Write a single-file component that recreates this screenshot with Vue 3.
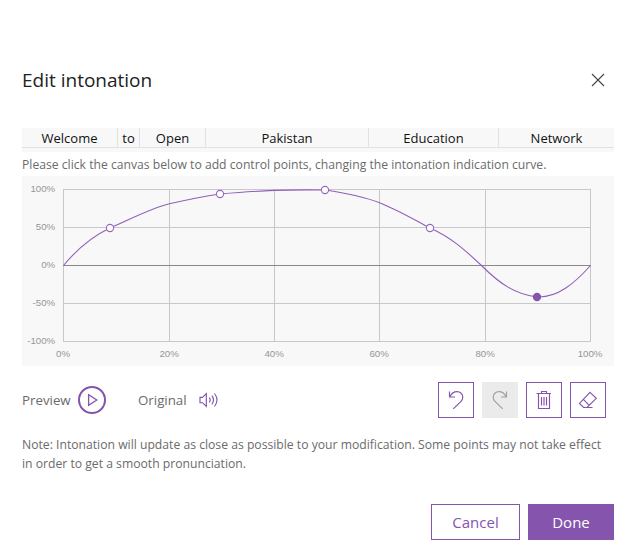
<script setup>
const words = [
  { text: 'Welcome', width: 96 },
  { text: 'to', width: 22 },
  { text: 'Open', width: 66 },
  { text: 'Pakistan', width: 163 },
  { text: 'Education', width: 130 },
  { text: 'Network', width: 115 },
]
const columns = words.map((w) => w.width + 'px').join(' ')

const xTicks = [
  { x: 63.5, label: '0%' },
  { x: 169.5, label: '20%' },
  { x: 274.5, label: '40%' },
  { x: 379.5, label: '60%' },
  { x: 485.5, label: '80%' },
  { x: 590.5, label: '100%' },
]
const yTicks = [
  { y: 189.5, label: '100%' },
  { y: 227.5, label: '50%' },
  { y: 265.5, label: '0%' },
  { y: 303.5, label: '-50%' },
  { y: 341.5, label: '-100%' },
]
const points = [
  { x: 110, y: 228 },
  { x: 220, y: 194 },
  { x: 325, y: 190 },
  { x: 430, y: 228 },
  { x: 537, y: 297, active: true },
]
const curve =
  'M63.5 265.5C78 248 93 236 110 228C128 220.5 150 208.5 169.5 203.8C186 200 203 196.5 220 194' +
  'C240 192.3 258 191 274 190.4C290 189.8 308 189.8 325 190C345 193 362 196 379.5 202.7' +
  'C397 209.5 413 219 430 228C450 237 463 248 482 266C500 284 515 294 537 297C557 298 574 284 590.5 265.5'
</script>

<template>
  <main class="dialog">
    <header class="head">
      <h1>Edit intonation</h1>
      <button class="close" aria-label="Close">
        <svg width="14" height="14" viewBox="0 0 14 14"><path d="M1 1l12 12M13 1L1 13" /></svg>
      </button>
    </header>

    <div class="strip">
      <div class="words" :style="{ gridTemplateColumns: columns }">
        <span v-for="w in words" :key="w.text">{{ w.text }}</span>
      </div>
    </div>
    <p class="hint">Please click the canvas below to add control points, changing the intonation indication curve.</p>

    <svg class="chart" width="592" height="190" viewBox="22 176 592 190">
      <g class="grid">
        <line v-for="t in xTicks" :key="t.x" :x1="t.x" :x2="t.x" y1="189" y2="342" />
        <line v-for="t in yTicks" :key="t.y" :y1="t.y" :y2="t.y" x1="63" x2="591" :class="{ zero: t.label === '0%' }" />
      </g>
      <g class="labels">
        <text v-for="t in yTicks" :key="t.y" x="55.2" :y="t.y + 2.8" text-anchor="end">{{ t.label }}</text>
        <text v-for="t in xTicks" :key="t.x" :x="t.x - 0.4" y="357" text-anchor="middle">{{ t.label }}</text>
      </g>
      <path class="curve" :d="curve" />
      <circle v-for="p in points" :key="p.x" :cx="p.x" :cy="p.y" r="3.6" :class="['point', { active: p.active }]" />
    </svg>

    <div class="toolbar">
      <span class="preview">Preview</span>
      <button class="play" aria-label="Play preview">
        <svg width="28" height="28" viewBox="0 0 28 28">
          <circle cx="14" cy="14" r="13" stroke-width="2" />
          <path d="M10.6 8.6v10.8l8.2-5.4z" stroke-width="1.3" />
        </svg>
      </button>
      <span class="original">Original</span>
      <button class="speaker" aria-label="Play original">
        <svg width="20" height="18" viewBox="0 0 20 18">
          <path d="M1 6.3h2.5L7.3 2.6v12.8L3.5 11.7H1zM10.3 6.7q1.8 2.3 0 4.6M12.9 4.7q3.2 4.300 0 8.600M15.500 2.500q5 6.500 0 13" />
        </svg>
      </button>
      <div class="tools">
        <button class="tool" aria-label="Undo">
          <svg width="34" height="34" viewBox="0 0 34 34">
            <path d="M10.500 8.500v5.500h5.500M10.800 13.700C12.500 10.500 15 8.600 18 8.600c3.300 0 5.800 2.500 5.800 5.600 0 1.700-.7 3-1.800 4.100L14.300 25.800" />
          </svg>
        </button>
        <button class="tool disabled" disabled aria-label="Redo">
          <svg width="34" height="34" viewBox="0 0 34 34">
            <path d="M23.500 8.500v5.500h-5.500M23.200 13.700C21.500 10.500 19 8.600 16 8.600c-3.300 0-5.800 2.500-5.800 5.600 0 1.700.7 3 1.800 4.100L19.700 25.800" />
          </svg>
        </button>
        <button class="tool" aria-label="Delete">
          <svg width="34" height="34" viewBox="0 0 34 34">
            <path d="M9.500 10.500h14.500M11.500 10.500v15h11v-15M14.500 10.500v-2h5v2M14.500 14v8.500M17 14v8.500M19.500 14v8.500" />
          </svg>
        </button>
        <button class="tool" aria-label="Erase">
          <svg width="34" height="34" viewBox="0 0 34 34">
            <path d="M19 9.300l6.300 6-9.300 9.200h-3.400l-4.100-4.100zM12.200 16.200l6 6.100M16 24.500h5.500" />
          </svg>
        </button>
      </div>
    </div>

    <p class="note">
      <span>Note: Intonation will update as close as possible to your modification. Some points may not take effect</span><br />
      <span>in order to get a smooth pronunciation.</span>
    </p>

    <footer class="actions">
      <button class="cancel">Cancel</button>
      <button class="done">Done</button>
    </footer>
  </main>
</template>

<style>
body {
  margin: 0;
  background: #fff;
}
</style>

<style scoped>
.dialog {
  box-sizing: border-box;
  width: 636px;
  height: 560px;
  padding: 60px 22px 0;
  font-family: 'Open Sans', 'Noto Sans', sans-serif;
  font-size: 13px;
  color: #6b6b6b;
  background: #fff;
}
button {
  box-sizing: border-box;
  display: flex;
  align-items: center;
  justify-content: center;
  margin: 0;
  padding: 0;
  border: 0;
  border-radius: 0;
  background: none;
  font-family: inherit;
}
svg {
  display: block;
  flex: none;
  fill: none;
}
.head {
  display: flex;
  align-items: center;
  justify-content: space-between;
  height: 40px;
}
h1 {
  margin: 0;
  font-size: 19px;
  font-weight: 400;
  line-height: 40px;
  color: #222;
}
.close {
  width: 32px;
  height: 32px;
}
.close path {
  stroke: #444;
  stroke-width: 1.1;
}
.strip {
  height: 24px;
  margin-top: 28px;
  background: #f8f8f8;
}
.words {
  display: grid;
  box-sizing: border-box;
  height: 20px;
  border-bottom: 1px solid #e1e1e1;
}
.words span {
  border-right: 1px solid #e1e1e1;
  text-align: center;
  line-height: 20px;
  color: #111;
}
.words span:last-child {
  border-right: 0;
}
.hint {
  height: 24px;
  margin: 0;
  line-height: 25px;
  font-size: 12.18px;
  white-space: nowrap;
}
.chart {
  background: #f8f8f8;
}
.grid line {
  stroke: #c8c8c8;
}
.grid .zero {
  stroke: #888;
}
.labels text {
  font: 9.7px 'Liberation Sans', sans-serif;
  fill: #969696;
}
.curve {
  stroke: #8f5fb8;
  stroke-width: 1.1;
}
.point {
  fill: #fff;
  stroke: #9668bd;
  stroke-width: 1.1;
}
.point.active {
  fill: #8555ae;
  stroke: #8555ae;
}
.toolbar {
  display: flex;
  align-items: center;
  height: 36px;
  margin-top: 16px;
  font-size: 13.3px;
}
.toolbar svg {
  stroke: #8555ae;
  stroke-width: 1.15;
}
.preview {
  width: 56px;
}
.original {
  width: 61px;
  margin-left: 32px;
}
.tools {
  display: flex;
  gap: 8px;
  margin-left: auto;
  margin-right: 8px;
}
.tool {
  width: 36px;
  height: 36px;
  border: 1px solid #8555ae;
}
.tool.disabled {
  border-color: #ebebeb;
  background: #ebebeb;
}
.tool.disabled svg {
  stroke: #a0a0a0;
}
.note {
  margin: 17px 0 0;
  height: 38px;
  font-size: 12.18px;
  line-height: 19px;
  white-space: nowrap;
}
.actions {
  display: flex;
  justify-content: flex-end;
  gap: 8px;
  margin-top: 31px;
}
.actions button {
  height: 36px;
  font-size: 15px;
}
.actions .cancel {
  width: 89px;
  border: 1px solid #8555ae;
  color: #8555ae;
}
.actions .done {
  width: 86px;
  background: #8555ae;
  color: #fff;
}
</style>
